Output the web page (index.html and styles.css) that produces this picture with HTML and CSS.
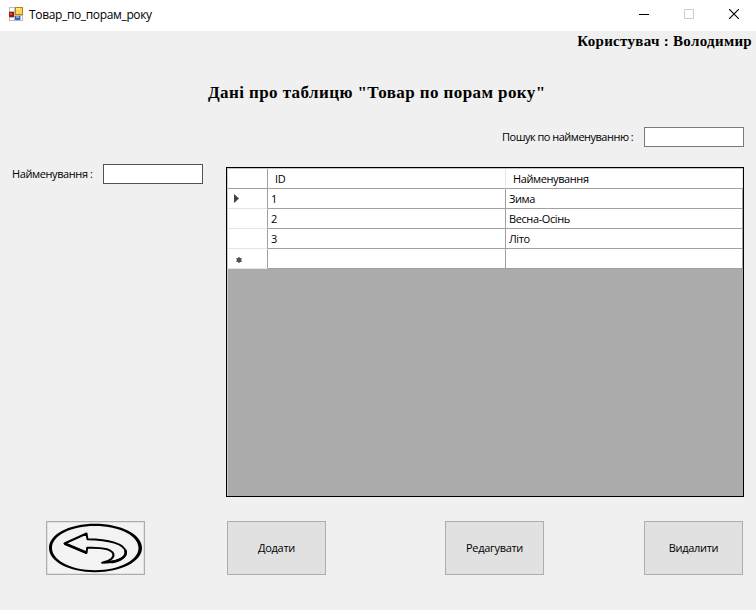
FILE: index.html
```html
<!DOCTYPE html>
<html lang="uk">
<head>
<meta charset="utf-8">
<title>Товар_по_порам_року</title>
<link rel="stylesheet" href="styles.css">
</head>
<body>
<header class="titlebar">
  <svg class="app-icon" width="14" height="14" viewBox="0 0 14 14" shape-rendering="crispEdges">
    <path fill="#b9bcc2" d="M0 0h14v14H0z"/>
    <path fill="#fff" d="M1 1h4v3H1zM1 11h4v2H1zM12 9h1v4h-1z"/>
    <path fill="#b8860b" d="M6 0h8v8H6z"/>
    <path fill="#ffd34f" d="M7 1h6v6H7z"/>
    <path fill="#ffe89a" d="M7 1h4v2H7z"/>
    <path fill="#a91408" d="M0 5h5v5H0z"/>
    <path fill="#e4523b" d="M1 6h2v2H1z"/>
    <path fill="#3265bd" d="M6 9h5v4H6z"/>
    <path fill="#77a8f5" d="M7 9h3v2H7z"/>
  </svg>
  <span class="window-title">Товар_по_порам_року</span>
  <div class="window-controls">
    <svg width="10" height="10" viewBox="0 0 10 10"><path d="M0 5.5h10" stroke="#000"/></svg>
    <svg width="10" height="10" viewBox="0 0 10 10"><path d="M.5.5h9v9h-9z" fill="none" stroke="#ccc"/></svg>
    <svg width="10" height="10" viewBox="0 0 10 10"><path d="M0 0l10 10M10 0L0 10" stroke="#000" stroke-width="1.15"/></svg>
  </div>
</header>
<main class="form">
  <div class="user">Користувач : Володимир</div>
  <h1 class="heading">Дані про таблицю "Товар по порам року"</h1>
  <div class="search">
    <label class="search-label" for="search">Пошук по найменуванню :</label>
    <input class="field field-search" id="search" type="text">
  </div>
  <div class="content">
    <div class="editor">
      <label class="name-label" for="name">Найменування :</label>
      <input class="field" id="name" type="text">
    </div>
    <div class="datagrid">
      <div class="row head"><div class="rh"></div><div class="cell">ID</div><div class="cell">Найменування</div></div>
      <div class="row"><div class="rh"><svg width="5" height="9" viewBox="0 0 5 9"><path d="M0 0l5 4.500L0 9z" fill="#404040"/></svg></div><div class="cell">1</div><div class="cell">Зима</div></div>
      <div class="row"><div class="rh"></div><div class="cell">2</div><div class="cell">Весна-Осінь</div></div>
      <div class="row"><div class="rh"></div><div class="cell">3</div><div class="cell">Літо</div></div>
      <div class="row"><div class="rh new"><svg width="6" height="6" viewBox="0 0 6 6"><path d="M3 0v6M.3 1.400l5.400 3.200M5.700 1.400l-5.400 3.200" stroke="#505050" stroke-width="1.200"/><circle cx="3" cy="3" r="2.300" fill="#505050"/></svg></div><div class="cell"></div><div class="cell"></div></div>
    </div>
  </div>
  <div class="actions">
    <button class="btn" aria-label="Назад">
      <svg width="95" height="50" viewBox="0 0 95 50" fill="none" stroke="#000">
        <path fill="#f3f3f3" stroke="none" d="M0 0h95v50H0z"/>
        <path fill="#000" stroke="none" fill-rule="evenodd" d="M47 .8C73 .8 94 11.500 94 25S73 49.200 47 49.200 1 38.500 1 25 21 .8 47 .8zM47 3C22 3 4 13 4 25s18 22.200 43 22.200S90.500 37 90.500 25 72 3 47 3z"/>
        <path stroke-width="2" stroke-linejoin="round" d="M16.500 20.500L38.500 10.500l1 5.800C60 16.500 77.500 20.500 77.800 29.500c.1 6-10.500 10-23.600 10.300 8-1.800 12.500-5.300 11-9.300-1.700-4.200-12-6.200-26-5.800l-.7 5.200z"/>
        <path stroke-width="2.600" d="M16.500 20.500L38.500 29.800M77.300 27c2.300 6.500-5 10.600-14 12.100"/>
      </svg>
    </button>
    <button class="btn">Додати</button>
    <button class="btn">Редагувати</button>
    <button class="btn">Видалити</button>
  </div>
</main>
</body>
</html>
```

FILE: styles.css
```css
* { box-sizing: border-box; }
body {
  margin: 0;
  width: 756px;
  height: 610px;
  overflow: hidden;
  background: #f0f0f0;
  color: #000;
  font: 11px/14px "Open Sans", "Noto Sans", sans-serif;
  letter-spacing: -0.400px;
  white-space: nowrap;
}
.titlebar {
  display: flex;
  align-items: center;
  height: 31px;
  padding: 0 17px 3px 9px;
  background: #fff;
}
.window-title {
  margin: 2px 0 0 6px;
  font-size: 12px;
  letter-spacing: -0.350px;
}
.window-controls { display: flex; gap: 35px; margin-left: auto; }
.form { display: flex; flex-direction: column; height: 579px; }
.user {
  height: 22px;
  padding-right: 4px;
  text-align: right;
  font: bold 15px/21px "Liberation Serif", serif;
  letter-spacing: 0.300px;
}
.heading {
  height: 24px;
  margin: 28px 0 0;
  padding-left: 208px;
  font: bold 17px/24px "Liberation Serif", serif;
  letter-spacing: 0.410px;
}
.search {
  display: flex;
  justify-content: flex-end;
  align-items: center;
  gap: 10px;
  height: 20px;
  margin: 22px 12px 0 0;
}
.search-label { width: 132px; letter-spacing: -0.500px; }
.field {
  width: 100px;
  height: 20px;
  padding: 2px;
  border: 1px solid #525252;
  border-radius: 0;
  background: #fff;
  outline: 0;
}
.field-search { border-color: #7a7a7a; }
.content {
  display: grid;
  grid-template-columns: 214px 518px;
  height: 330px;
  margin: 20px 0 0 12px;
}
.editor { display: flex; align-items: center; height: 20px; margin-top: -3px; }
.name-label { width: 91px; }
.datagrid {
  height: 330px;
  padding-left: 1px;
  border: 1px solid #000;
  background: #ababab;
  box-shadow: inset 1px 1px #c8c8c8;
}
.row {
  display: grid;
  grid-template-columns: 40px 238px 237px;
  height: 20px;
}
.row > div {
  display: flex;
  align-items: center;
  border-right: 1px solid #a0a0a0;
  border-bottom: 1px solid #a0a0a0;
  background: #fff;
}
.row .rh { padding-left: 6px; border-bottom-color: #e5e5e5; }
.row .new { padding: 3px 0 0 8px; }
.row .cell { padding-left: 3px; }
.row.head { height: 21px; padding-top: 1px; }
.row.head .cell { padding-left: 7px; border-right-color: #e5e5e5; }
.row.head .rh { border-bottom-color: #a0a0a0; }
.actions {
  display: grid;
  grid-template-columns: 181px 218px 199px 99px;
  margin: 24px 0 0 46px;
}
.btn {
  display: flex;
  align-items: center;
  justify-content: center;
  width: 99px;
  height: 54px;
  padding: 0;
  border: 1px solid #adadad;
  border-radius: 0;
  background: #e1e1e1;
  color: #000;
  font: inherit;
  letter-spacing: -0.300px;
}
```
